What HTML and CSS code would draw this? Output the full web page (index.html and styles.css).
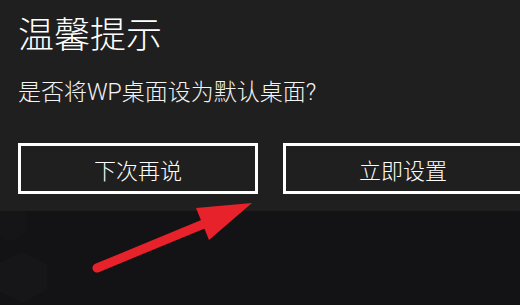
FILE: index.html
```html
<!DOCTYPE html>
<html lang="zh">
<head>
<meta charset="utf-8">
<link rel="stylesheet" href="styles.css">
</head>
<body>
<div class="screen">
  <div class="dialog">
    <h1 class="title">温馨提示</h1>
    <p class="message">是否将WP桌面设为默认桌面?</p>
    <div class="actions">
      <button class="btn">下次再说</button>
      <button class="btn">立即设置</button>
    </div>
  </div>
  <svg class="overlay" width="520" height="305" viewBox="0 0 520 305">
    <polygon points="22,252 47,264 47,290 22,303 -3,290 -3,264" fill="#161619"/>
    <polygon points="0,211 26,211 26,232 10,242 -6,232" fill="#151518"/>
    <line x1="97" y1="268" x2="206" y2="223" stroke="#e8222b" stroke-width="9" stroke-linecap="round"/>
    <polygon points="252,203 196,208 209,240" fill="#e8222b"/>
  </svg>
</div>
</body>
</html>
```
FILE: styles.css
```css
* { box-sizing: border-box; }
html, body {
  margin: 0;
  padding: 0;
  background: #131316;
}
.screen {
  position: relative;
  width: 520px;
  height: 305px;
  overflow: hidden;
  font-family: "Roboto", "Noto Sans CJK SC", sans-serif;
}
.dialog {
  position: relative;
  z-index: 1;
  background: #1f1f1f;
  height: 211px;
  padding: 14px 0 0 18px;
  display: flex;
  flex-direction: column;
}
.title {
  margin: 0;
  font-size: 36px;
  font-weight: 300;
  line-height: 44px;
  color: #ffffff;
}
.message {
  margin: 20px 0 0 0;
  font-size: 23px;
  font-weight: 300;
  line-height: 30px;
  color: #f4f4f4;
}
.actions {
  display: flex;
  gap: 25px;
  margin-top: 35px;
}
.btn {
  flex: 0 0 240px;
  height: 51px;
  border: 3px solid #ffffff;
  background: #1f1f1f;
  color: #ffffff;
  font-family: inherit;
  font-size: 22px;
  font-weight: 300;
  padding: 0;
  border-radius: 0;
}
.overlay {
  position: absolute;
  left: 0;
  top: 0;
  z-index: 2;
}
```
